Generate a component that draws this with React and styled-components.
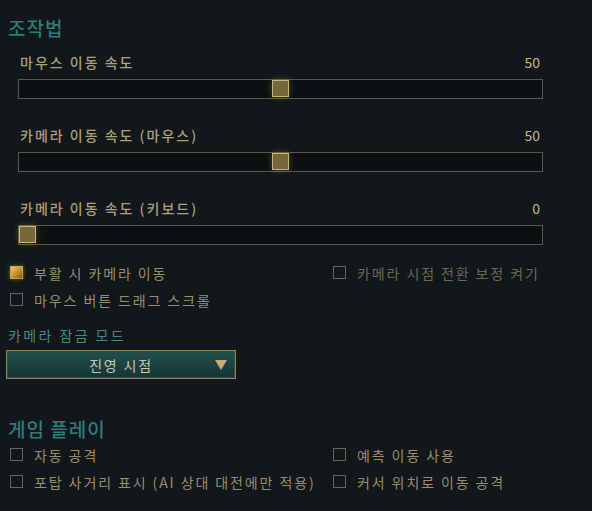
import React from 'react';
import styled, { createGlobalStyle } from 'styled-components';

const GlobalStyle = createGlobalStyle`
  html, body {
    margin: 0;
    padding: 0;
    background: #11171a;
  }
  body {
    font-family: "Noto Sans CJK KR", "Noto Sans", sans-serif;
  }
`;

const Page = styled.div`
  width: 592px;
  height: 511px;
  box-sizing: border-box;
  padding-top: 16px;
  background: #11171a;
  overflow: hidden;
`;

const SectionTitle = styled.div`
  margin-left: 8px;
  height: 24px;
  line-height: 24px;
  font-size: 19px;
  font-weight: 500;
  letter-spacing: 1px;
  color: #2f7d7a;
  margin-top: ${p => p.$top || 0}px;
`;

const SliderBlock = styled.div`
  margin-left: 18px;
  width: 525px;
  margin-top: ${p => p.$top}px;
`;

const LabelRow = styled.div`
  display: flex;
  justify-content: space-between;
  align-items: center;
  height: 16px;
  padding: 0 3px 0 2px;
`;

const SliderLabel = styled.span`
  font-size: 14px;
  font-weight: 500;
  letter-spacing: 2px;
  color: #ad9f7c;
`;

const SliderValue = styled.span`
  font-size: 14px;
  color: #c2b690;
`;

const Track = styled.div`
  position: relative;
  margin-top: 9px;
  height: 20px;
  box-sizing: border-box;
  border: 1px solid #5c5844;
  background: #0c1012;
`;

const Thumb = styled.div`
  position: absolute;
  top: 0;
  width: 17px;
  height: 17px;
  box-sizing: border-box;
  border: 1px solid #c9b577;
  background: #76683d;
  box-shadow: 0 0 6px rgba(210, 175, 80, 0.35);
`;

const CheckGrid = styled.div`
  display: grid;
  grid-template-columns: 323px 1fr;
  grid-auto-rows: 27px;
  padding-left: 10px;
  margin-top: ${p => p.$top}px;
`;

const CheckItem = styled.div`
  display: flex;
  align-items: center;
  gap: 11px;
  font-size: 14px;
  letter-spacing: 1.9px;
  white-space: nowrap;
  color: ${p => (p.$dim ? '#6f6852' : '#9a8d6c')};
`;

const Box = styled.span`
  width: 13px;
  height: 13px;
  box-sizing: border-box;
  border: 1px solid ${p => (p.$checked ? '#c9a447' : '#6a6552')};
  background: ${p =>
    p.$checked ? 'linear-gradient(135deg, #f0cc5a 0%, #b88a2a 60%, #7a5a1a 100%)' : 'transparent'};
  box-shadow: ${p => (p.$checked ? '0 0 4px rgba(220, 170, 60, 0.5)' : 'none')};
  flex-shrink: 0;
`;

const SubTitle = styled.div`
  margin: 13px 0 0 8px;
  height: 18px;
  line-height: 18px;
  font-size: 14px;
  letter-spacing: 2.4px;
  color: #4f8582;
`;

const Dropdown = styled.div`
  position: relative;
  margin: 6px 0 0 6px;
  width: 230px;
  height: 29px;
  box-sizing: border-box;
  border: 1px solid #8c8262;
  box-shadow: inset 0 0 0 1px #3d4a3e;
  background: linear-gradient(180deg, #22504e 0%, #1a403f 60%, #153434 100%);
  display: flex;
  align-items: center;
  justify-content: center;
  font-size: 14px;
  letter-spacing: 1.8px;
  color: #c9c6b2;
`;

const Arrow = styled.span`
  position: absolute;
  right: 8px;
  top: 9px;
  width: 0;
  height: 0;
  border-left: 6px solid transparent;
  border-right: 6px solid transparent;
  border-top: 10px solid #c9ab78;
`;

const sliders = [
  { label: '마우스 이동 속도', value: 50, top: 14 },
  { label: '카메라 이동 속도 (마우스)', value: 50, top: 28 },
  { label: '카메라 이동 속도 (키보드)', value: 0, top: 28 },
];

const Slider = ({ label, value, top }) => (
  <SliderBlock $top={top}>
    <LabelRow>
      <SliderLabel>{label}</SliderLabel>
      <SliderValue>{value}</SliderValue>
    </LabelRow>
    <Track>
      <Thumb style={{ left: `${(523 - 17) * (value / 100)}px` }} />
    </Track>
  </SliderBlock>
);

const Check = ({ label, checked, dim }) => (
  <CheckItem $dim={dim}>
    <Box $checked={checked} />
    {label}
  </CheckItem>
);

const App = () => (
  <Page>
    <GlobalStyle />
    <SectionTitle>조작법</SectionTitle>
    {sliders.map(s => (
      <Slider key={s.label} {...s} />
    ))}
    <CheckGrid $top={14}>
      <Check label="부활 시 카메라 이동" checked />
      <Check label="카메라 시점 전환 보정 켜기" dim />
      <Check label="마우스 버튼 드래그 스크롤" />
    </CheckGrid>
    <SubTitle>카메라 잠금 모드</SubTitle>
    <Dropdown>
      진영 시점
      <Arrow />
    </Dropdown>
    <SectionTitle $top={38}>게임 플레이</SectionTitle>
    <CheckGrid $top={0}>
      <Check label="자동 공격" />
      <Check label="예측 이동 사용" />
      <Check label="포탑 사거리 표시 (AI 상대 대전에만 적용)" />
      <Check label="커서 위치로 이동 공격" />
    </CheckGrid>
  </Page>
);

export default App;
